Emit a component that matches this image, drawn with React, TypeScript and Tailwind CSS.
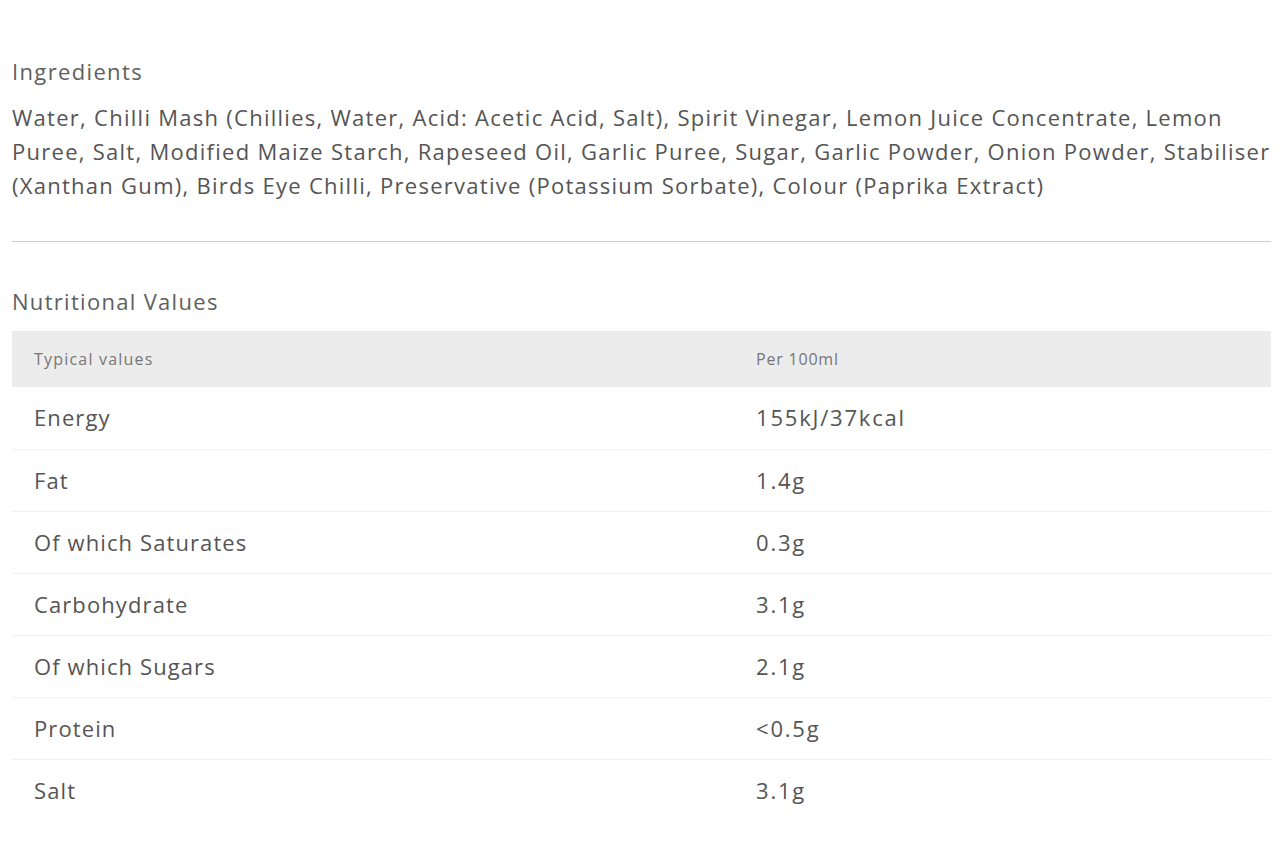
const rows = [
  { label: "Energy", value: "155kJ/37kcal" },
  { label: "Fat", value: "1.4g" },
  { label: "Of which Saturates", value: "0.3g" },
  { label: "Carbohydrate", value: "3.1g" },
  { label: "Of which Sugars", value: "2.1g" },
  { label: "Protein", value: "<0.5g" },
  { label: "Salt", value: "3.1g" }
]

const ingredientLines = [
  "Water, Chilli Mash (Chillies, Water, Acid: Acetic Acid, Salt), Spirit Vinegar, Lemon Juice Concentrate, Lemon",
  "Puree, Salt, Modified Maize Starch, Rapeseed Oil, Garlic Puree, Sugar, Garlic Powder, Onion Powder, Stabiliser",
  "(Xanthan Gum), Birds Eye Chilli, Preservative (Potassium Sorbate), Colour (Paprika Extract)"
]

export default function App() {
  return (
    <div className="min-h-[853px] bg-white font-['Open_Sans',sans-serif] text-[#555]">
      <div className="pl-3 pr-[9px] pt-[57px]">
        <h3 className="text-[22px] leading-[28px] tracking-[1.35px] text-[#606060]">Ingredients</h3>
        <p className="mt-[15px] text-[22px] leading-[34px] tracking-[1.27px] text-[#555]">
          {ingredientLines.map(line => (
            <span key={line} className="block whitespace-nowrap">
              {line}
            </span>
          ))}
        </p>

        <div className="mt-[39px] h-px bg-[#cfcfcf]" />

        <h3 className="mt-[45px] text-[22px] leading-[28px] tracking-[1.3px] text-[#606060]">
          Nutritional Values
        </h3>

        <table className="mt-[16px] w-full border-collapse">
          <thead>
            <tr className="bg-[#ececec]">
              <th className="h-[56px] w-[744px] pl-[22px] text-left text-[16px] font-normal tracking-[1.2px] text-[#777]">
                Typical values
              </th>
              <th className="h-[56px] text-left text-[16px] font-normal tracking-[0.8px] text-[#777]">
                Per 100ml
              </th>
            </tr>
          </thead>
          <tbody>
            {rows.map((row, i) => (
              <tr
                key={row.label}
                className={i < rows.length - 1 ? "border-b border-[#f0f0f0]" : ""}
              >
                <td className="h-[62px] pl-[22px] text-[22px] tracking-[1.1px] text-[#555]">{row.label}</td>
                <td className="h-[62px] text-[22px] tracking-[1.8px] text-[#555]">{row.value}</td>
              </tr>
            ))}
          </tbody>
        </table>
      </div>
    </div>
  )
}
